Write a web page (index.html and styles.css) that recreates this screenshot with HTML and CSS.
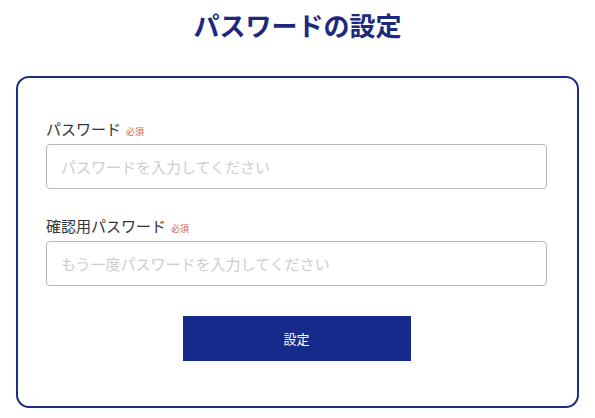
FILE: index.html
```html
<!DOCTYPE html>
<html lang="ja">
<head>
    <meta charset="UTF-8">
    <meta name="viewport" content="width=device-width, initial-scale=1.0">
    <title>パスワードの設定</title>
    <link rel="stylesheet" href="styles.css">
</head>
<body>
    <h1 class="page-title">パスワードの設定</h1>

    <form class="card">
        <div class="field">
            <label class="field-label" for="pw">パスワード<span class="required">必須</span></label>
            <input class="field-input" id="pw" type="password" placeholder="パスワードを入力してください">
        </div>
        <div class="field">
            <label class="field-label" for="pw2">確認用パスワード<span class="required">必須</span></label>
            <input class="field-input" id="pw2" type="password" placeholder="もう一度パスワードを入力してください">
        </div>
        <div class="actions">
            <button class="submit-btn" type="button">設定</button>
        </div>
    </form>
</body>
</html>
```

FILE: styles.css
```css
body {
    margin: 0;
    padding: 0;
    background-color: #fff;
    font-family: "Noto Sans CJK JP", "Noto Sans", sans-serif;
    color: #333;
}
.page-title {
    margin: 0;
    padding-top: 6px;
    height: 76px;
    box-sizing: border-box;
    text-align: center;
    font-size: 26px;
    line-height: 38px;
    font-weight: 700;
    color: #1b2a7f;
}
.card {
    margin: 0 16px;
    padding: 40px 30px 45px 28px;
    border: 2px solid #1e2d80;
    border-radius: 13px;
    display: flex;
    flex-direction: column;
    gap: 26px;
}
.field {
    display: flex;
    flex-direction: column;
    gap: 2px;
}
.field-label {
    font-size: 15px;
    line-height: 21px;
    color: #333;
}
.required {
    margin-left: 5px;
    font-size: 9px;
    color: #e0604a;
}
.field-input {
    height: 45px;
    box-sizing: border-box;
    padding: 0 14px;
    border: 1px solid #b8b8b8;
    border-radius: 4px;
    font-family: inherit;
    font-size: 15px;
    color: #333;
    background: #fff;
}
.field-input::placeholder {
    color: #cdcdcd;
}
.actions {
    display: flex;
    justify-content: center;
    margin-top: 4px;
}
.submit-btn {
    width: 228px;
    height: 45px;
    border: none;
    background-color: #152a8a;
    color: #fff;
    font-family: inherit;
    font-size: 13px;
    cursor: pointer;
}
```
